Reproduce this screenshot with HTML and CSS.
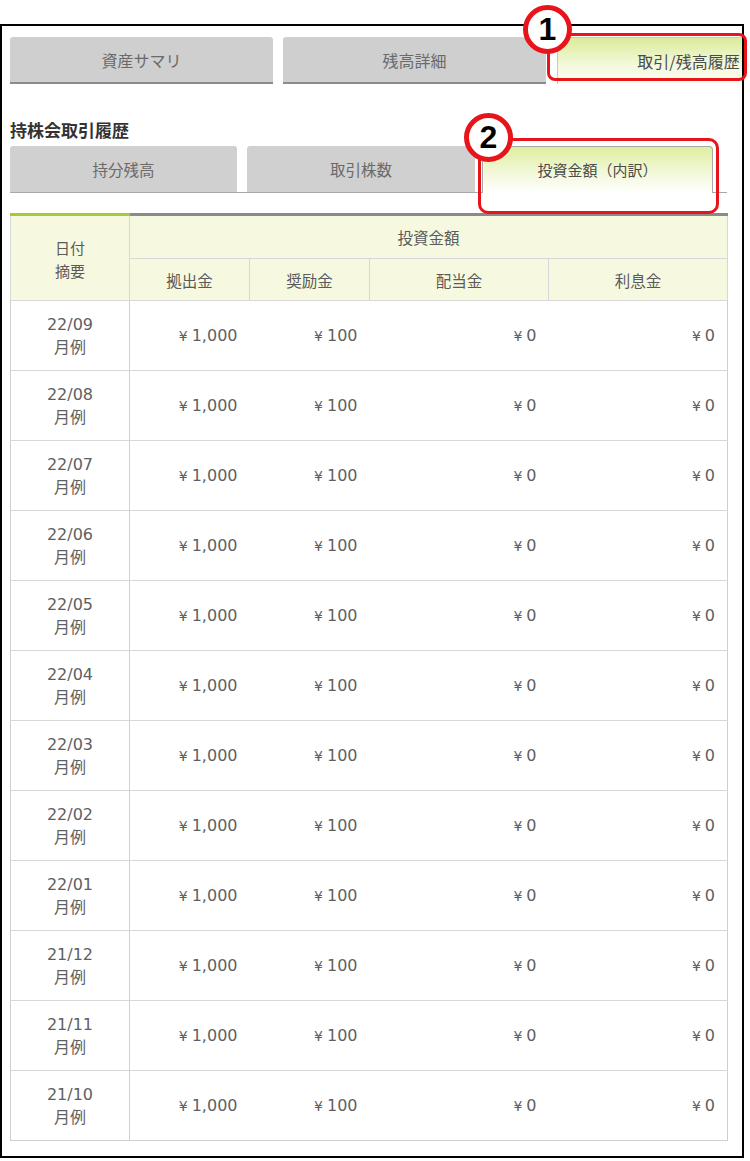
FILE: index.html
```html
<!DOCTYPE html>
<html lang="ja">
<head>
<meta charset="utf-8">
<title>持株会取引履歴</title>
<link rel="stylesheet" href="styles.css">
</head>
<body>
<div class="frame">
  <div class="tabs">
    <div class="tab">資産サマリ</div>
    <div class="tab">残高詳細</div>
    <div class="tab tab-active">取引/残高履歴</div>
  </div>
  <h2 class="title">持株会取引履歴</h2>
  <div class="subtabs">
    <div class="subtab st1">持分残高</div>
    <div class="subtab st2">取引株数</div>
    <div class="subtab st3 subtab-active">投資金額（内訳）</div>
  </div>
  <table class="grid">
    <colgroup>
      <col class="c1"><col class="c2"><col class="c3"><col class="c4"><col class="c5">
    </colgroup>
    <thead>
      <tr class="h1">
        <th rowspan="2" class="first">日付<br>摘要</th>
        <th colspan="4" class="rest">投資金額</th>
      </tr>
      <tr class="h2">
        <th>拠出金</th><th>奨励金</th><th>配当金</th><th>利息金</th>
      </tr>
    </thead>
    <tbody>
      <tr><td class="d">22/09<br>月例</td><td><span class="yen">¥</span>1,000</td><td><span class="yen">¥</span>100</td><td><span class="yen">¥</span>0</td><td><span class="yen">¥</span>0</td></tr>
      <tr><td class="d">22/08<br>月例</td><td><span class="yen">¥</span>1,000</td><td><span class="yen">¥</span>100</td><td><span class="yen">¥</span>0</td><td><span class="yen">¥</span>0</td></tr>
      <tr><td class="d">22/07<br>月例</td><td><span class="yen">¥</span>1,000</td><td><span class="yen">¥</span>100</td><td><span class="yen">¥</span>0</td><td><span class="yen">¥</span>0</td></tr>
      <tr><td class="d">22/06<br>月例</td><td><span class="yen">¥</span>1,000</td><td><span class="yen">¥</span>100</td><td><span class="yen">¥</span>0</td><td><span class="yen">¥</span>0</td></tr>
      <tr><td class="d">22/05<br>月例</td><td><span class="yen">¥</span>1,000</td><td><span class="yen">¥</span>100</td><td><span class="yen">¥</span>0</td><td><span class="yen">¥</span>0</td></tr>
      <tr><td class="d">22/04<br>月例</td><td><span class="yen">¥</span>1,000</td><td><span class="yen">¥</span>100</td><td><span class="yen">¥</span>0</td><td><span class="yen">¥</span>0</td></tr>
      <tr><td class="d">22/03<br>月例</td><td><span class="yen">¥</span>1,000</td><td><span class="yen">¥</span>100</td><td><span class="yen">¥</span>0</td><td><span class="yen">¥</span>0</td></tr>
      <tr><td class="d">22/02<br>月例</td><td><span class="yen">¥</span>1,000</td><td><span class="yen">¥</span>100</td><td><span class="yen">¥</span>0</td><td><span class="yen">¥</span>0</td></tr>
      <tr><td class="d">22/01<br>月例</td><td><span class="yen">¥</span>1,000</td><td><span class="yen">¥</span>100</td><td><span class="yen">¥</span>0</td><td><span class="yen">¥</span>0</td></tr>
      <tr><td class="d">21/12<br>月例</td><td><span class="yen">¥</span>1,000</td><td><span class="yen">¥</span>100</td><td><span class="yen">¥</span>0</td><td><span class="yen">¥</span>0</td></tr>
      <tr><td class="d">21/11<br>月例</td><td><span class="yen">¥</span>1,000</td><td><span class="yen">¥</span>100</td><td><span class="yen">¥</span>0</td><td><span class="yen">¥</span>0</td></tr>
      <tr><td class="d">21/10<br>月例</td><td><span class="yen">¥</span>1,000</td><td><span class="yen">¥</span>100</td><td><span class="yen">¥</span>0</td><td><span class="yen">¥</span>0</td></tr>
    </tbody>
  </table>
</div>

<div class="mark mark-rect1"></div>
<div class="mark mark-circle1">1</div>
<div class="mark mark-rect2"></div>
<div class="mark mark-circle2">2</div>
</body>
</html>
```

FILE: styles.css
```css
html, body {
  margin: 0;
  padding: 0;
  background: #fff;
}
body {
  position: relative;
  width: 750px;
  height: 1161px;
  font-family: "DejaVu Sans", "Noto Sans CJK JP", sans-serif;
  color: #5a5a5a;
}
.frame {
  box-sizing: border-box;
  margin-top: 24px;
  width: 744px;
  height: 1134px;
  border: 2px solid #000;
  padding: 11px 0 0 8px;
  overflow: hidden;
}

/* top tabs */
.tabs {
  display: flex;
  gap: 10px;
  width: 900px;
}
.tab {
  flex: 0 0 auto;
  width: 263px;
  height: 47px;
  box-sizing: border-box;
  background: #cfcfcf;
  border-radius: 3px 3px 0 0;
  border-bottom: 2px solid #8c8c8c;
  font-family: "Noto Sans CJK JP", sans-serif;
  font-size: 16px;
  color: #6a6a6a;
  display: flex;
  align-items: center;
  justify-content: center;
  padding-top: 1px;
}
.tab-active {
  margin-left: 1px;
  background: linear-gradient(#dbeb9a, #f3f9dd 60%, #fbfdf3);
  border: 1px solid #c8c8c8;
  border-bottom: none;
  color: #4b4b4b;
  padding-top: 0;
}

.title {
  margin: 35px 0 0;
  height: 21px;
  line-height: 21px;
  font-family: "Noto Sans CJK JP", sans-serif;
  font-size: 17px;
  font-weight: bold;
  color: #333;
}

/* sub tabs */
.subtabs {
  display: flex;
  align-items: flex-end;
  margin-top: 6px;
  width: 717px;
  height: 47px;
  box-sizing: border-box;
  border-bottom: 1px solid #a8a8a8;
}
.subtab {
  flex: 0 0 auto;
  height: 46px;
  box-sizing: border-box;
  background: #d0d0d0;
  border-radius: 3px 3px 0 0;
  font-family: "Noto Sans CJK JP", sans-serif;
  font-size: 15.5px;
  color: #6a6a6a;
  display: flex;
  align-items: center;
  justify-content: center;
}
.st1 { width: 227px; }
.st2 { width: 228px; margin-left: 10px; }
.st3 { width: 231px; margin-left: 7px; }
.subtab-active {
  height: 47px;
  margin-bottom: -1px;
  background: linear-gradient(#deee9f, #f2f8d8 55%, #fff);
  border: 1px solid #a8a8a8;
  border-bottom: none;
  border-radius: 4px 4px 0 0;
  color: #4b4b4b;
  font-size: 15px;
  padding-bottom: 1px;
}

/* table */
.grid {
  margin-top: 20px;
  width: 717px;
  border-collapse: collapse;
  table-layout: fixed;
  border: 1px solid #cfcfcf;
}
.c1 { width: 119px; }
.c2 { width: 120px; }
.c3 { width: 120px; }
.c4 { width: 179px; }
.c5 { width: 179px; }

.grid th {
  background: #f6f9e0;
  font-family: "Noto Sans CJK JP", sans-serif;
  font-weight: normal;
  font-size: 15.5px;
  color: #5a5a5a;
  border: 1px solid #d8d8d8;
  padding: 0;
  text-align: center;
}
.grid .h1 th {
  height: 42px;
  border-top: 3px solid #8a8a8a;
}
.grid .h1 th.first {
  border-top-color: #a6c93a;
  line-height: 23px;
  padding-top: 2px;
  font-size: 15px;
}
.grid .h2 th {
  height: 41px;
}

.grid td {
  height: 69px;
  padding: 0 12px 0 0;
  border-top: 1px solid #d8d8d8;
  text-align: right;
  font-size: 16px;
  color: #5f5f5f;
  vertical-align: middle;
}
.yen {
  font-size: 14px;
  margin-right: 4px;
}
.grid td.d {
  padding: 0;
  text-align: center;
  line-height: 23px;
  border-right: 1px solid #cfcfcf;
  font-size: 16px;
}

/* annotation overlays */
.mark {
  position: absolute;
  box-sizing: border-box;
}
.mark-rect1 {
  left: 547px;
  top: 33px;
  width: 200px;
  height: 48px;
  border: 3px solid #e8141c;
  border-radius: 8px;
}
.mark-rect2 {
  left: 478px;
  top: 138px;
  width: 241px;
  height: 76px;
  border: 3px solid #e8141c;
  border-radius: 10px;
}
.mark-circle1,
.mark-circle2 {
  width: 49px;
  height: 49px;
  border: 5px solid #e8141c;
  border-radius: 50%;
  background: #fff;
  color: #000;
  font-family: "Liberation Sans", Arial, sans-serif;
  font-weight: bold;
  font-size: 32px;
  line-height: 39px;
  text-align: center;
}
.mark-circle1 { left: 523px; top: 5px; }
.mark-circle2 { left: 464px; top: 113px; }
```
